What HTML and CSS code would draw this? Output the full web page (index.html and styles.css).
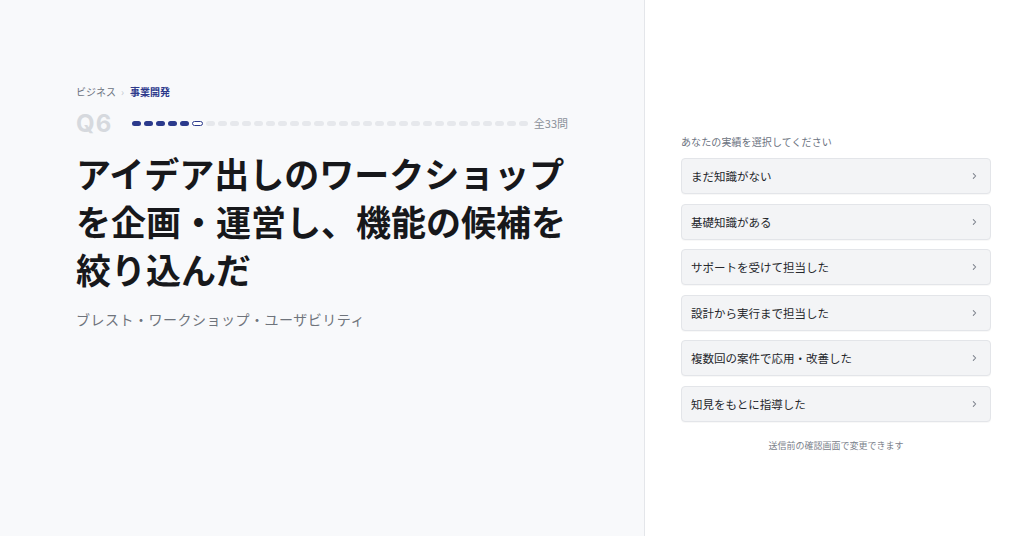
FILE: index.html
```html
<!DOCTYPE html>
<html lang="ja">
<head>
<meta charset="utf-8">
<title>Q6</title>
<link rel="stylesheet" href="styles.css">
</head>
<body>
<div class="page">
  <section class="left">
    <nav class="crumb">
      <span class="crumb-parent">ビジネス</span>
      <span class="crumb-sep">›</span>
      <span class="crumb-current">事業開発</span>
    </nav>
    <div class="qrow">
      <span class="qnum">Q6</span>
      <div class="progress">
        <span class="seg done"></span><span class="seg done"></span><span class="seg done"></span><span class="seg done"></span><span class="seg done"></span><span class="seg current"></span><span class="seg"></span><span class="seg"></span><span class="seg"></span><span class="seg"></span><span class="seg"></span><span class="seg"></span><span class="seg"></span><span class="seg"></span><span class="seg"></span><span class="seg"></span><span class="seg"></span><span class="seg"></span><span class="seg"></span><span class="seg"></span><span class="seg"></span><span class="seg"></span><span class="seg"></span><span class="seg"></span><span class="seg"></span><span class="seg"></span><span class="seg"></span><span class="seg"></span><span class="seg"></span><span class="seg"></span><span class="seg"></span><span class="seg"></span><span class="seg"></span>
      </div>
      <span class="total">全33問</span>
    </div>
    <h1 class="title">アイデア出しのワークショップを企画・運営し、機能の候補を絞り込んだ</h1>
    <p class="tags">ブレスト・ワークショップ・ユーザビリティ</p>
  </section>
  <section class="right">
    <p class="prompt">あなたの実績を選択してください</p>
    <div class="options">
      <button class="option"><span>まだ知識がない</span><svg class="chev" viewBox="0 0 6 10" width="5" height="8"><polyline points="1.5,2 4.5,5 1.5,8"/></svg></button>
      <button class="option"><span>基礎知識がある</span><svg class="chev" viewBox="0 0 6 10" width="5" height="8"><polyline points="1.5,2 4.5,5 1.5,8"/></svg></button>
      <button class="option"><span>サポートを受けて担当した</span><svg class="chev" viewBox="0 0 6 10" width="5" height="8"><polyline points="1.5,2 4.5,5 1.5,8"/></svg></button>
      <button class="option"><span>設計から実行まで担当した</span><svg class="chev" viewBox="0 0 6 10" width="5" height="8"><polyline points="1.5,2 4.5,5 1.5,8"/></svg></button>
      <button class="option"><span>複数回の案件で応用・改善した</span><svg class="chev" viewBox="0 0 6 10" width="5" height="8"><polyline points="1.5,2 4.5,5 1.5,8"/></svg></button>
      <button class="option"><span>知見をもとに指導した</span><svg class="chev" viewBox="0 0 6 10" width="5" height="8"><polyline points="1.5,2 4.5,5 1.5,8"/></svg></button>
    </div>
    <p class="note">送信前の確認画面で変更できます</p>
  </section>
</div>
</body>
</html>
```

FILE: styles.css
```css
* { box-sizing: border-box; }
html, body {
  margin: 0;
  padding: 0;
  width: 1024px;
  height: 536px;
  overflow: hidden;
  background: #ffffff;
  font-family: "Noto Sans CJK JP", "Noto Sans", sans-serif;
}
.page {
  display: flex;
  width: 1024px;
  height: 536px;
}
.left {
  width: 645px;
  flex: none;
  background: #f8f9fb;
  border-right: 1px solid #e4e6ea;
  padding: 84px 76px 0 76px;
}
.crumb {
  display: flex;
  align-items: center;
  font-size: 10px;
  line-height: 16px;
  height: 16px;
}
.crumb-parent { color: #6b7280; }
.crumb-sep { color: #c4c8cf; margin: 0 6px 0 5px; font-size: 10px; }
.crumb-current { color: #2d3a8c; font-weight: 700; }
.qrow {
  display: flex;
  align-items: center;
  height: 30px;
  margin-top: 8px;
}
.qnum {
  font-family: "Inter", "Liberation Sans", sans-serif;
  font-weight: 700;
  font-size: 24px;
  letter-spacing: 1px;
  color: #d6d9de;
  width: 56px;
  flex: none;
}
.progress {
  flex: 1;
  display: flex;
  gap: 3px;
  align-items: center;
}
.seg {
  flex: 1;
  height: 5px;
  border-radius: 2.5px;
  background: #e6e8ec;
}
.seg.done { background: #2b3a8c; }
.seg.current {
  background: #ffffff;
  border: 1px solid #2b3a8c;
}
.total {
  flex: none;
  margin-left: 6px;
  font-size: 11px;
  color: #8a9099;
}
.title {
  margin: 11px 0 0 0;
  font-size: 35px;
  line-height: 48px;
  font-weight: 700;
  color: #17181b;
  letter-spacing: 0;
}
.tags {
  margin: 16px 0 0 0;
  font-size: 14px;
  line-height: 20px;
  letter-spacing: 0.5px;
  color: #6f747c;
}
.right {
  flex: 1;
  padding: 135px 0 0 36px;
}
.prompt {
  margin: 0;
  font-size: 10px;
  line-height: 14px;
  color: #6b7280;
  letter-spacing: 0.1px;
}
.options {
  margin-top: 9px;
  width: 310px;
  display: flex;
  flex-direction: column;
  gap: 9.5px;
}
.option {
  display: flex;
  align-items: center;
  justify-content: space-between;
  height: 36px;
  padding: 0 13px 0 9px;
  background: #f3f4f6;
  border: 1px solid #e3e5e9;
  border-radius: 4px;
  box-shadow: 0 1px 1px rgba(0,0,0,0.03);
  font-family: "Noto Sans CJK JP", "Noto Sans", sans-serif;
  font-size: 11.5px;
  color: #25272c;
  text-align: left;
  cursor: pointer;
}
.chev polyline {
  fill: none;
  stroke: #7b818b;
  stroke-width: 1.3;
  stroke-linecap: round;
  stroke-linejoin: round;
}
.note {
  width: 310px;
  margin: 17px 0 0 0;
  text-align: center;
  font-size: 9px;
  line-height: 13px;
  color: #7b818b;
}
```
